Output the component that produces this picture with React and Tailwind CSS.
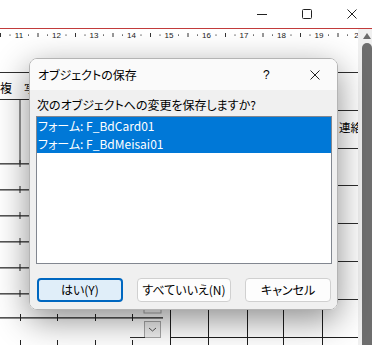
import React from 'react'

const font = { fontFamily: '"Noto Sans CJK JP", "Noto Sans", sans-serif' }

function Ruler() {
  const marks = []
  for (let k = 0; k < 10; k++) {
    const x = 19 + 37.5 * k
    marks.push(
      <g key={k}>
        <text x={x} y={37.5} fontSize="8" textAnchor="middle" fill="#222" style={{ fontFamily: '"Liberation Sans", sans-serif' }}>
          {k === 9 ? '2' : 11 + k}
        </text>
        <rect x={x - 9.5} y={34.5} width="1" height="1.2" fill="#333" />
        <rect x={x + 9} y={34.5} width="1" height="1.2" fill="#333" />
        <rect x={x - 19} y={33} width="1" height="4" fill="#333" />
      </g>
    )
  }
  return <g>{marks}</g>
}

function Canvas() {
  const rowsLeft = [163, 189, 215, 241, 267, 293]
  const rowsRight = [110, 148, 185, 223, 261, 299]
  const ticks = [20, 57, 95, 132]
  return (
    <svg width="358" height="316" viewBox="0 29 358 316" className="block">
      <Ruler />
      {/* top field */}
      <rect x="0" y="72" width="358" height="1" fill="#2e2e2e" />
      <text x="0" y="93" fontSize="12" fill="#000" style={font}>複</text>
      <text x="24" y="93" fontSize="11" fill="#222" style={font}>写</text>
      <rect x="0" y="99" width="40" height="1" fill="#2e2e2e" />
      <rect x="19.5" y="99" width="1" height="66" fill="#2e2e2e" />
      {rowsLeft.map(y => (
        <g key={y}>
          <rect x="0" y={y} width="40" height="1" fill="#555" />
          <rect x="0" y={y + 1} width="40" height="1" fill="#9a9a9a" />
          <rect x="19.5" y={y - 3} width="1" height="7" fill="#222" />
        </g>
      ))}
      <text x="339" y="132" fontSize="11.5" fill="#000" style={font}>連絡</text>
      {rowsRight.map(y => (
        <rect key={y} x="330" y={y} width="28" height="1" fill="#2e2e2e" />
      ))}
      {/* bottom fields */}
      <rect x="144" y="298" width="17" height="15" fill="none" stroke="#a8a8a8" />
      <rect x="0" y="317" width="163" height="1" fill="#555" />
      <rect x="0" y="318" width="163" height="1" fill="#8e8e8e" />
      {ticks.map(x => (
        <g key={x}>
          <rect x={x} y="314" width="1" height="7" fill="#222" />
          <rect x={x} y="340" width="1" height="5" fill="#222" />
        </g>
      ))}
      <rect x="144.5" y="321.5" width="16" height="16" fill="#efefef" stroke="#a8a8a8" />
      <path d="M149 328 l3.5 3 l3.5 -3" fill="none" stroke="#555" strokeWidth="1" />
      <rect x="130" y="337" width="15" height="1" fill="#2e2e2e" />
      <rect x="170" y="300" width="1" height="45" fill="#1e1e1e" />
      {[208, 247, 283, 322].map(x => (
        <rect key={x} x={x} y="300" width="1" height="45" fill="#1e1e1e" />
      ))}
      <rect x="170" y="337" width="188" height="1" fill="#1e1e1e" />
    </svg>
  )
}

function Btn({ children, primary, w }) {
  return (
    <button
      className={`h-[24px] rounded-[4px] text-[12px] text-black flex items-center justify-center ${w} ${primary ? 'border-2 border-[#0067c0] bg-[#e0eef9]' : 'border border-[#d0d0d0] bg-[#fdfdfd]'}`}
      style={{ ...font, fontFeatureSettings: '"palt"' }}
    >
      {children}
    </button>
  )
}

export default function App() {
  return (
    <div className="w-[372px] h-[345px] relative overflow-hidden bg-white" style={font}>
      {/* window caption */}
      <div className="h-[28px] flex items-center justify-end pr-[15px] gap-[35px]">
        <svg width="10" height="10" viewBox="0 0 10 10"><path d="M0 5.5h10" stroke="#222" strokeWidth="1" /></svg>
        <svg width="10" height="10" viewBox="0 0 10 10"><rect x="0.5" y="0.5" width="9" height="9" rx="1" fill="none" stroke="#222" /></svg>
        <svg width="10" height="10" viewBox="0 0 10 10"><path d="M0.5 0.5L9.5 9.5M9.5 0.5L0.5 9.5" stroke="#222" strokeWidth="1" /></svg>
      </div>
      <div className="h-px bg-[#c23b3b]" />

      <div className="flex h-[316px]">
        <div className="w-[358px]">
          <Canvas />
        </div>
        <div className="flex-1 bg-[#f0f0f0] flex flex-col items-end">
          <div className="w-[10px] h-[14px] flex items-center justify-center">
            <svg width="8" height="6" viewBox="0 0 8 6"><path d="M4 0L8 6H0z" fill="#6b6b6b" /></svg>
          </div>
          <div className="w-[10px] flex-1 rounded-t-full bg-[#6e6e6e]" />
        </div>
      </div>

      {/* dialog */}
      <div
        className="absolute left-[29px] top-[58px] w-[309px] h-[252px] rounded-[8px] border border-[#b4b4b4] overflow-hidden flex flex-col shadow-[0_10px_34px_rgba(0,0,0,0.45)]"
        style={{ fontFeatureSettings: '"palt"' }}
      >
        <div className="h-[31px] bg-[#fafafa] flex items-center pl-[8px] text-[12px] text-black">
          <span className="flex-1">オブジェクトの保存</span>
          <span className="w-[10px] text-[12px] mr-[37px]" style={{ fontFamily: '"Liberation Sans", sans-serif' }}>?</span>
          <svg width="10" height="10" viewBox="0 0 10 10" className="mr-[17px]"><path d="M0.5 0.5L9.5 9.5M9.5 0.5L0.5 9.5" stroke="#222" strokeWidth="1" /></svg>
        </div>
        <div className="flex-1 bg-[#f0f0f0] px-[6px] pt-[6px] flex flex-col">
          <div className="pl-[1px] h-[17px] leading-[17px] text-[12px] text-black">次のオブジェクトへの変更を保存しますか?</div>
          <div className="mt-[3px] w-[296px] h-[148px] border border-[#828790] bg-white flex flex-col">
            <div className="h-[18px] leading-[18px] bg-[#0078d7] text-white text-[12px] pl-[1px]">フォーム: F_BdCard01</div>
            <div className="h-[18px] leading-[18px] bg-[#0078d7] text-white text-[12px] pl-[1px]">フォーム: F_BdMeisai01</div>
          </div>
          <div className="mt-[14px] pl-[1px] flex gap-[14px]">
            <Btn primary w="w-[86px]">はい(Y)</Btn>
            <Btn w="w-[95px]">すべていいえ(N)</Btn>
            <Btn w="w-[86px]">キャンセル</Btn>
          </div>
        </div>
      </div>
    </div>
  )
}
